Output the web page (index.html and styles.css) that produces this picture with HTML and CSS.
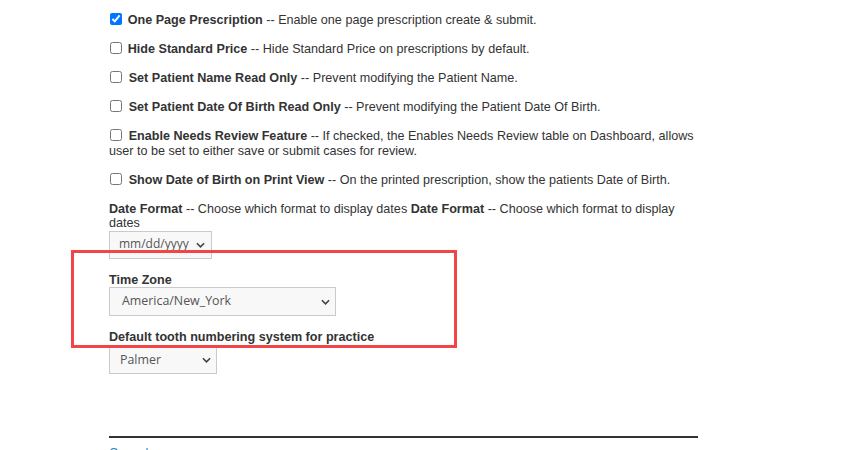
FILE: index.html
```html
<!DOCTYPE html>
<html>
<head>
<meta charset="utf-8">
<link rel="stylesheet" href="styles.css">
</head>
<body>
<div class="page">
  <div class="settings">
    <div class="opt"><input type="checkbox" class="cb" checked><b>One Page Prescription</b> -- Enable one page prescription create &amp; submit.</div>
    <div class="opt"><input type="checkbox" class="cb"><b>Hide Standard Price</b> -- Hide Standard Price on prescriptions by default.</div>
    <div class="opt"><input type="checkbox" class="cb cb-wide"><b>Set Patient Name Read Only</b> -- Prevent modifying the Patient Name.</div>
    <div class="opt"><input type="checkbox" class="cb cb-wide"><b>Set Patient Date Of Birth Read Only</b> -- Prevent modifying the Patient Date Of Birth.</div>
    <div class="opt"><input type="checkbox" class="cb cb-wide"><b>Enable Needs Review Feature</b> -- If checked, the Enables Needs Review table on Dashboard, allows user to be set to either save or submit cases for review.</div>
    <div class="opt"><input type="checkbox" class="cb cb-wide"><b>Show Date of Birth on Print View</b> -- On the printed prescription, show the patients Date of Birth.</div>

    <div class="field">
      <div class="label"><b>Date Format</b> -- Choose which format to display dates <b>Date Format</b> -- Choose which format to display dates</div>
      <div class="select sel-date"><span>mm/dd/yyyy</span><svg class="chev" viewBox="0 0 10 6"><path d="M1 1 L5 5 L9 1" fill="none" stroke="#444" stroke-width="1.8"/></svg></div>
    </div>
    <div class="field">
      <div class="label"><b>Time Zone</b></div>
      <div class="select sel-tz"><span>America/New_York</span><svg class="chev" viewBox="0 0 10 6"><path d="M1 1 L5 5 L9 1" fill="none" stroke="#444" stroke-width="1.8"/></svg></div>
    </div>
    <div class="field field-last">
      <div class="label"><b>Default tooth numbering system for practice</b></div>
      <div class="select sel-tooth"><span>Palmer</span><svg class="chev" viewBox="0 0 10 6"><path d="M1 1 L5 5 L9 1" fill="none" stroke="#444" stroke-width="1.8"/></svg></div>
    </div>
  </div>
  <hr class="rule">
  <div class="actions"><a class="link" href="#">Cancel</a></div>
  <div class="highlight"></div>
</div>
</body>
</html>
```
FILE: styles.css
```css
html, body {
  margin: 0;
  padding: 0;
  background: #fff;
  overflow: hidden;
}
body {
  font-family: "Liberation Sans", Arial, sans-serif;
  font-size: 12.6px;
  line-height: 14.5px;
  color: #333;
}
.page {
  position: relative;
  width: 856px;
  height: 450px;
}
.settings {
  margin-left: 109px;
  width: 589px;
  padding-top: 13px;
}
.opt {
  margin-bottom: 14.5px;
}
.cb {
  width: 11.7px;
  height: 11.7px;
  margin: 0 6px 0 1px;
  vertical-align: -1px;
}
.cb-wide {
  margin-right: 7px;
}
.field {
  margin-bottom: 14px;
}
.field-last {
  margin-top: 1px;
}
.select {
  display: flex;
  align-items: center;
  justify-content: space-between;
  box-sizing: border-box;
  background: #f8f8f8;
  border: 1px solid #cacaca;
  font-family: "Open Sans", "Liberation Sans", sans-serif;
  font-size: 12.4px;
  color: #555;
}
.chev {
  width: 9px;
  height: 6px;
  flex: none;
}
.sel-date {
  width: 103px;
  height: 28px;
  padding: 0 6px 0 9px;
  font-size: 12px;
}
.sel-tz {
  width: 227px;
  height: 29px;
  padding: 0 5px 0 12px;
}
.sel-tooth {
  width: 108px;
  height: 27px;
  margin-top: 2px;
  padding: 0 5px 0 10px;
}
.rule {
  margin: 62px 0 0 109px;
  width: 589px;
  height: 2px;
  border: 0;
  background: #333;
}
.actions {
  margin-left: 109px;
  padding-top: 8px;
}
.link {
  color: #2f86c0;
  text-decoration: none;
}
.highlight {
  position: absolute;
  left: 71px;
  top: 250px;
  width: 386px;
  height: 98px;
  box-sizing: border-box;
  border: 3px solid #f24646;
}
```
